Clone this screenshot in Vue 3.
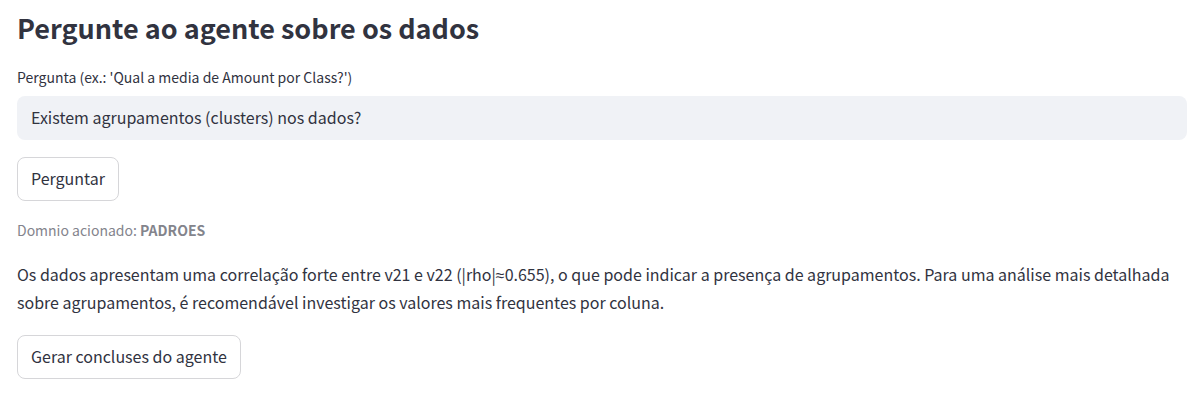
<script setup>
import { ref } from 'vue'

const question = ref('Existem agrupamentos (clusters) nos dados?')
</script>

<template>
  <main class="page">
    <h2 class="title">Pergunte ao agente sobre os dados</h2>
    <label class="label" for="question">Pergunta (ex.: 'Qual a media de Amount por Class?')</label>
    <input id="question" v-model="question" class="field" type="text" />
    <button class="button" type="button">Perguntar</button>
    <p class="caption">Domnio acionado: <strong>PADROES</strong></p>
    <p class="answer">
      Os dados apresentam uma correlação forte entre v21 e v22 (|rho|<span class="symbol">≈</span>0.655), o que pode indicar a
      presença de agrupamentos. Para uma análise mais detalhada sobre agrupamentos, é recomendável
      investigar os valores mais frequentes por coluna.
    </p>
    <button class="button" type="button">Gerar concluses do agente</button>
  </main>
</template>

<style>
body {
  background: #ffffff;
}
</style>

<style scoped>
.page {
  display: flex;
  flex-direction: column;
  align-items: flex-start;
  padding: 8px 11px 16px 17px;
  color: #31333f;
  font-family: "Source Sans Pro", "Noto Sans CJK SC", sans-serif;
  font-size: 16px;
}

.title {
  margin: 0 0 18px;
  font-size: 27px;
  font-weight: 600;
  line-height: 39px;
}

.label {
  margin-bottom: 7px;
  font-size: 14px;
  line-height: 24px;
}

.field {
  box-sizing: border-box;
  width: 100%;
  height: 44px;
  padding: 0 14px 2px;
  border: 0;
  border-radius: 8px;
  background: #f0f2f6;
  color: inherit;
  font: inherit;
}

.button {
  box-sizing: border-box;
  height: 44px;
  margin: 17px 0;
  padding: 0 13px 2px;
  border: 1px solid #d6d6d9;
  border-radius: 8px;
  background: #ffffff;
  color: inherit;
  font: inherit;
}

.caption {
  margin: 0 0 18px;
  color: #83848c;
  font-size: 14px;
  line-height: 24px;
}

.answer {
  margin: 0 0 2px;
  line-height: 28px;
}

.symbol {
  font-family: "Liberation Sans", sans-serif;
  line-height: 1;
}
</style>
